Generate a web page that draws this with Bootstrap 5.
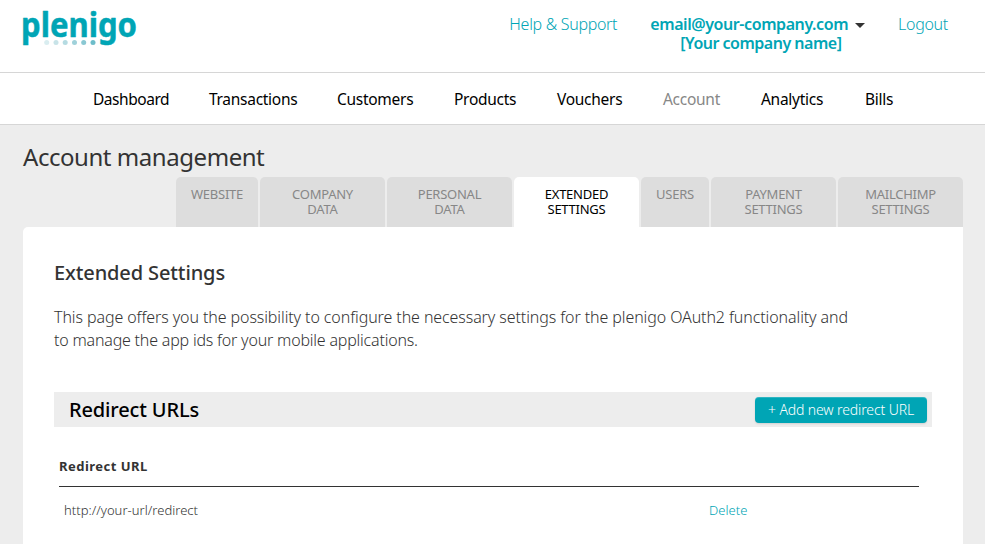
<!DOCTYPE html>
<html lang="en">
<head>
<meta charset="utf-8">
<meta name="viewport" content="width=device-width, initial-scale=1">
<title>plenigo – Account management</title>
<link rel="stylesheet" href="https://cdn.jsdelivr.net/npm/bootstrap@5.3.0/dist/css/bootstrap.min.css">
<style>
  :root { --teal: #00a5b5; --line: #d6d6d6; }
  body { font-family: "Noto Sans", "Open Sans", sans-serif; font-size: 16px; line-height: 19px; color: #333; background: #ededed; height: 544px; overflow: hidden; }
  a { text-decoration: none; }
  .top-bar { height: 73px; border-bottom: 1px solid var(--line); padding: 0 37px 0 22px; }
  .brand-mark { display: block; margin-top: 6px; overflow: visible; }
  .top-links { margin-top: 15px; }
  .top-links a { color: var(--teal); }
  .light-link { font-weight: 300; letter-spacing: -.3px; }
  .account-menu { font-weight: 600; letter-spacing: -.42px; margin-left: 33px; margin-right: 33px; }
  .account-menu .caret { width: 10px; height: 5px; margin-left: 7px; margin-top: 1px; }
  .company-line { margin-left: 30px; letter-spacing: -.5px; }
  .main-nav { height: 52px; border-bottom: 1px solid var(--line); padding: 2px 0 0 93px; }
  .main-nav .nav { display: grid; grid-template-columns: 116px 128px 117px 103px 106px 98px 104px auto; }
  .main-nav .nav-link { padding: 0; color: #000; font-size: 15.5px; letter-spacing: -.28px; }
  .main-nav .nav-link:first-child { letter-spacing: -.45px; }
  .main-nav .nav-link.active { color: #878787; }
  .page-body { padding: 0 22px 0 23px; }
  .page-title { font-size: 24px; line-height: 30px; font-weight: 400; letter-spacing: -.45px; padding-top: 17px; height: 52px; margin: 0; }
  .section-tabs { gap: 2px; }
  .section-tabs .nav-link { height: 50px; width: 125px; padding: 10px 15px 0; border-radius: 5px 5px 0 0; background: #ddd; color: #878787; font-size: 13px; line-height: 15px; letter-spacing: -.25px; text-align: center; }
  .section-tabs .nav-link.active { background: #fff; color: #000; }
  .section-tabs .tab-website { width: 82px; }
  .section-tabs .tab-users { width: 68px; }
  .panel { background: #fff; border-radius: 5px 0 0 0; height: 330px; padding: 34px 31px 0; }
  .panel h2 { font-size: 20px; line-height: 24px; font-weight: 500; letter-spacing: -.12px; margin: 0 0 21px; }
  .intro { font-weight: 300; line-height: 23px; letter-spacing: -.093px; margin: 0 0 40px; }
  .intro-end { letter-spacing: -.2px; }
  .list-head { background: #ededed; height: 35px; padding: 0 5px 0 15px; }
  .list-head h3 { color: #000; font-size: 20px; line-height: 24px; font-weight: 500; letter-spacing: -.15px; margin: 0; }
  .btn-add { background: var(--teal); color: #fff; width: 172px; height: 26px; margin-top: 1px; padding: 0; border: 0; border-radius: 4px; font-size: 14px; font-weight: 300; line-height: 26px; letter-spacing: -.12px; box-shadow: inset 0 1px 0 rgba(255,255,255,.18), 0 1px 2px rgba(0,0,0,.12); }
  .url-table { width: 860px; margin: 29px 0 0 5px; font-size: 13px; line-height: 20px; }
  .url-table th { font-weight: 700; letter-spacing: .47px; padding: 0 0 10px; border-bottom: 1px solid #333; }
  .url-table td { font-weight: 300; padding: 13px 0 0 5px; letter-spacing: .03px; }
  .url-table td a { color: var(--teal); }
</style>
</head>
<body>
<header class="top-bar bg-white d-flex justify-content-between align-items-start">
  <a href="#" aria-label="plenigo">
    <svg class="brand-mark" width="116" height="42" viewBox="0 0 116 42">
      <text x="-1" y="30.5" font-family="Noto Sans, sans-serif" font-weight="700" font-size="34.5" textLength="116" lengthAdjust="spacingAndGlyphs" fill="#00a5b5" stroke="#00a5b5" stroke-width=".5" stroke-linejoin="round">plenigo</text>
      <g fill="#00a5b5">
        <circle cx="24.7" cy="36.6" r="2.5" fill="#d9edf0"/>
        <circle cx="34" cy="36.6" r="2.5" fill="#c8e3e8"/>
        <circle cx="43.2" cy="36.6" r="2.5" fill="#b5dbe2"/>
        <circle cx="52.5" cy="36.6" r="2.5" fill="#9fd1da"/>
        <circle cx="61.7" cy="36.6" r="2.5" fill="#8ac8d3"/>
        <circle cx="71" cy="36.6" r="2.5" fill="#6dbdca"/>
      </g>
    </svg>
  </a>
  <div class="top-links d-flex align-items-start">
    <a class="light-link" href="#">Help &amp; Support</a>
    <a class="account-menu d-flex flex-column" href="#">
      <span class="d-flex align-items-center">email@your-company.com
        <svg class="caret" viewBox="0 0 10 5"><path d="M0 0h10L5 5z" fill="#333"/></svg></span>
      <span class="company-line">[Your company name]</span>
    </a>
    <a class="light-link" href="#">Logout</a>
  </div>
</header>
<nav class="main-nav bg-white d-flex align-items-center">
  <div class="nav">
    <a class="nav-link" href="#">Dashboard</a>
    <a class="nav-link" href="#">Transactions</a>
    <a class="nav-link" href="#">Customers</a>
    <a class="nav-link" href="#">Products</a>
    <a class="nav-link" href="#">Vouchers</a>
    <a class="nav-link active" href="#">Account</a>
    <a class="nav-link" href="#">Analytics</a>
    <a class="nav-link" href="#">Bills</a>
  </div>
</nav>
<main class="page-body">
  <h1 class="page-title">Account management</h1>
  <div class="nav section-tabs justify-content-end">
    <a class="nav-link tab-website" href="#">WEBSITE</a>
    <a class="nav-link" href="#">COMPANY<br>DATA</a>
    <a class="nav-link" href="#">PERSONAL<br>DATA</a>
    <a class="nav-link active" href="#">EXTENDED<br>SETTINGS</a>
    <a class="nav-link tab-users" href="#">USERS</a>
    <a class="nav-link" href="#">PAYMENT<br>SETTINGS</a>
    <a class="nav-link" href="#">MAILCHIMP<br>SETTINGS</a>
  </div>
  <section class="panel">
    <h2>Extended Settings</h2>
    <p class="intro">This page offers you the possibility to configure the necessary settings for the plenigo OAuth2 functionality and<br><span class="intro-end">to manage the app ids for your mobile applications.</span></p>
    <div class="list-head d-flex justify-content-between align-items-center">
      <h3>Redirect URLs</h3>
      <button class="btn btn-add" type="button">+ Add new redirect URL</button>
    </div>
    <table class="url-table">
      <colgroup><col style="width:645px"><col></colgroup>
      <thead><tr><th colspan="2">Redirect URL</th></tr></thead>
      <tbody><tr><td>http://your-url/redirect</td><td><a href="#">Delete</a></td></tr></tbody>
    </table>
  </section>
</main>
<script src="https://cdn.jsdelivr.net/npm/bootstrap@5.3.0/dist/js/bootstrap.bundle.min.js"></script>
</body>
</html>
